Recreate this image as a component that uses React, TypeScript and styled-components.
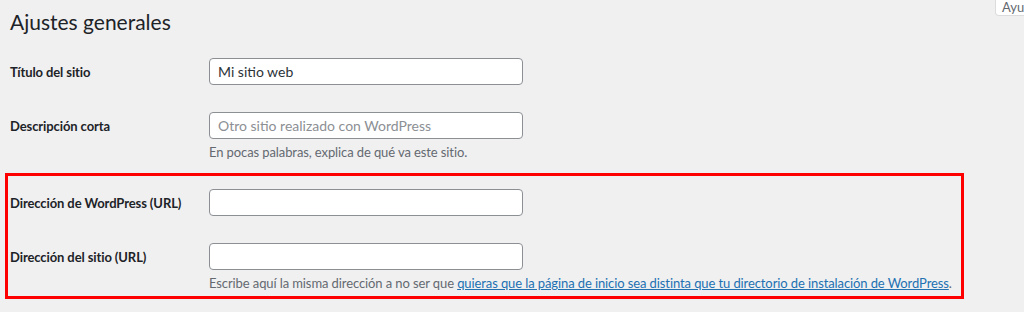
import styled, { createGlobalStyle } from "styled-components";

const GlobalStyle = createGlobalStyle`
  html, body {
    margin: 0;
    padding: 0;
    background: #f0f0f1;
  }
  body {
    font-family: Lato, "Liberation Sans", Arial, sans-serif;
    color: #1d2327;
    font-size: 13px;
  }
  * {
    box-sizing: border-box;
  }
`;

const Wrap = styled.div`
  position: relative;
  width: 1024px;
  height: 312px;
  overflow: hidden;
  padding: 7px 0 0 10px;
`;

const Title = styled.h1`
  margin: 0 0 8px;
  font-size: 21px;
  font-weight: 400;
  line-height: 30px;
  color: #1d2327;
`;

const HelpTab = styled.button`
  position: absolute;
  top: -1px;
  left: 995px;
  width: 80px;
  height: 17px;
  padding: 0 6px;
  text-align: left;
  font-family: inherit;
  font-size: 13px;
  line-height: 14px;
  color: #646970;
  background: #fff;
  border: 1px solid #dcdcde;
  border-top: none;
  border-radius: 0 0 4px 4px;
`;

const Form = styled.div`
  position: relative;
  display: flex;
  flex-direction: column;
`;

const Row = styled.div`
  display: flex;
  align-items: flex-start;
  padding: 13px 0 14px;
`;

const Label = styled.label`
  width: 199px;
  flex-shrink: 0;
  height: 27px;
  display: flex;
  align-items: center;
  font-size: 13px;
  font-weight: 700;
  letter-spacing: -0.1px;
  color: #1d2327;
  white-space: nowrap;
`;

const Field = styled.div`
  display: flex;
  flex-direction: column;
`;

const Input = styled.input`
  width: 314px;
  height: 27px;
  padding: 0 8px;
  font-family: inherit;
  font-size: 14px;
  color: #2c3338;
  background: #fff;
  border: 1px solid #8c8f94;
  border-radius: 4px;
  outline: none;

  &::placeholder {
    color: #8c8f94;
  }
`;

const Description = styled.p`
  margin: 4px 0 0;
  font-size: 13px;
  line-height: 19px;
  letter-spacing: -0.1px;
  color: #646970;
  white-space: nowrap;
`;

const Link = styled.a`
  color: #2271b1;
  text-decoration: underline;
`;

const Highlight = styled.div`
  position: absolute;
  left: -5px;
  top: 128px;
  width: 959px;
  height: 126px;
  border: 3px solid #ff0000;
  pointer-events: none;
`;

export default function App() {
  return (
    <Wrap>
      <GlobalStyle />
      <Title>Ajustes generales</Title>
      <HelpTab>Ayuda ▾</HelpTab>
      <Form>
        <Row>
          <Label>Título del sitio</Label>
          <Field>
            <Input defaultValue="Mi sitio web" />
          </Field>
        </Row>
        <Row>
          <Label>Descripción corta</Label>
          <Field>
            <Input placeholder="Otro sitio realizado con WordPress" />
            <Description>En pocas palabras, explica de qué va este sitio.</Description>
          </Field>
        </Row>
        <Row>
          <Label>Dirección de WordPress (URL)</Label>
          <Field>
            <Input />
          </Field>
        </Row>
        <Row>
          <Label>Dirección del sitio (URL)</Label>
          <Field>
            <Input />
            <Description>
              Escribe aquí la misma dirección a no ser que{" "}
              <Link href="#">
                quieras que la página de inicio sea distinta que tu directorio de instalación de WordPress
              </Link>
              .
            </Description>
          </Field>
        </Row>
        <Highlight />
      </Form>
    </Wrap>
  );
}
